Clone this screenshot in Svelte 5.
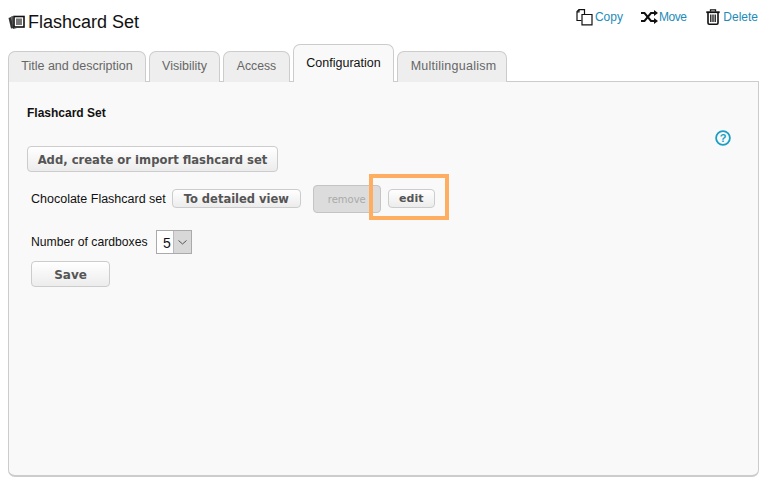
<script>
	let tabs = [
		{ label: 'Title and description' },
		{ label: 'Visibility' },
		{ label: 'Access' },
		{ label: 'Configuration', active: true },
		{ label: 'Multilingualism' }
	];
</script>

<div class="page">
	<header>
		<h1>
			<svg class="set-icon" width="17" height="16" viewBox="0 0 17 16">
				<path d="M3 3 L0.5 4 L3 14.5 L6 14 Z" fill="#333" />
				<path d="M5 2 L3 2.5 L5 15 L9 15 L5.5 14 Z" fill="#555" />
				<rect x="6" y="2.5" width="10" height="10.5" fill="none" stroke="#111" stroke-width="1.6" />
				<rect x="8" y="4.5" width="6" height="6.5" fill="#777" />
			</svg>
			Flashcard Set
		</h1>
		<div class="actions">
			<a href="#copy">
				<svg width="17" height="17" viewBox="0 0 17 17" fill="none" stroke="#111" stroke-width="1.2">
					<path d="M5.5 11.5 H1 V2.5 L3 .7 H8.5 V5" />
					<path d="M3 .7 V3 H1" />
					<path d="M6 5.5 H16 V15.8 H6 Z" fill="#fff" />
				</svg>
				Copy
			</a>
			<a href="#move" class="move">
				<svg width="17" height="14" viewBox="0 0 17 14" fill="none" stroke="#111" stroke-width="2">
					<path d="M0 3 H3.5 L10 11 H13" />
					<path d="M0 11 H3.5 L10 3 H13" />
					<path d="M13 0 L17 3 L13 6 Z M13 8 L17 11 L13 14 Z" fill="#111" stroke="none" />
				</svg>
				Move
			</a>
			<a href="#delete" class="delete">
				<svg width="14" height="16" viewBox="0 0 14 16" fill="none" stroke="#111">
					<path d="M.3 3.2 H13.7" stroke-width="1.8" />
					<path d="M4.5 2.5 V.8 H9.5 V2.5" stroke-width="1.3" />
					<path d="M2 4 V14 Q2 15.2 3.2 15.2 H10.8 Q12 15.2 12 14 V4" stroke-width="1.6" />
					<path d="M4.8 5.5 V13 M7 5.5 V13 M9.2 5.5 V13" stroke-width="1.3" />
				</svg>
				Delete
			</a>
		</div>
	</header>

	<nav class="tabs">
		{#each tabs as tab}
			<button class="tab" class:active={tab.active}>{tab.label}</button>
		{/each}
	</nav>

	<section class="panel">
		<h2>Flashcard Set</h2>
		<svg class="help" width="16" height="16" viewBox="0 0 16 16">
			<circle cx="8" cy="8" r="6.9" fill="none" stroke="#1a9fc4" stroke-width="1.8" />
			<text x="8" y="11.8" text-anchor="middle" class="help-mark">?</text>
		</svg>

		<button class="btn add">Add, create or import flashcard set</button>

		<div class="row set-row">
			<span class="set-name">Chocolate Flashcard set</span>
			<button class="btn small detail">To detailed view</button>
			<button class="btn remove" disabled>remove</button>
			<button class="btn small edit">edit</button>
			<div class="highlight"></div>
		</div>

		<div class="row boxes-row">
			<span>Number of cardboxes</span>
			<div class="select">
				<span class="value">5</span>
				<span class="arrow">
					<svg width="9" height="5" viewBox="0 0 9 5" fill="none" stroke="#555">
						<path d="M.5 .5 L4.5 4 L8.5 .5" />
					</svg>
				</span>
			</div>
		</div>

		<button class="btn save">Save</button>
	</section>
</div>

<style>
	:global(body) {
		background: #fff;
		font-family: 'Liberation Sans', Arial, sans-serif;
	}

	.page {
		padding: 0 18px 0 8px;
		width: 751px;
		height: 490px;
		box-sizing: content-box;
	}

	header {
		display: flex;
		justify-content: space-between;
		height: 44px;
	}

	h1 {
		display: flex;
		align-items: center;
		gap: 3px;
		margin: 12px 0 0;
		height: 20px;
		font-size: 18px;
		font-weight: 400;
		color: #111;
	}

	.set-icon {
		flex-shrink: 0;
	}

	.actions {
		display: flex;
		gap: 18px;
		margin: 8px 1px 0 0;
		height: 18px;
	}

	.actions a {
		display: flex;
		align-items: center;
		gap: 2px;
		font-size: 12px;
		color: #1e8bb8;
		text-decoration: none;
	}

	.actions .move {
		gap: 1px;
		margin-right: 2px;
		letter-spacing: -0.5px;
	}

	.actions .delete {
		gap: 3px;
	}

	.tabs {
		display: flex;
		align-items: flex-end;
		gap: 3px;
		height: 38px;
		margin-bottom: -1px;
		position: relative;
		z-index: 1;
	}

	.tab {
		flex-shrink: 0;
		height: 31px;
		padding: 0 0 2px;
		border: 1px solid #ccc;
		border-bottom: none;
		border-radius: 7px 7px 0 0;
		background: #eee;
		color: #666;
		font: 12.5px 'Liberation Sans', Arial, sans-serif;
	}

	.tab:nth-child(1) {
		width: 138px;
	}

	.tab:nth-child(2) {
		width: 71px;
	}

	.tab:nth-child(3) {
		width: 67px;
		font-size: 12.2px;
	}

	.tab:nth-child(4) {
		width: 101px;
	}

	.tab:nth-child(5) {
		width: 110px;
		letter-spacing: 0.25px;
		padding-left: 3px;
	}

	.tab.active {
		height: 38px;
		background: #f9f9f9;
		color: #111;
	}

	.panel {
		position: relative;
		height: 396px;
		box-sizing: border-box;
		border: 1px solid #ccc;
		border-bottom-width: 2px;
		border-radius: 0 0 7px 7px;
		background: #f9f9f9;
		padding: 24px 18px;
		font-size: 12px;
		color: #111;
	}

	h2 {
		margin: 0 0 26px;
		font-size: 12px;
		line-height: 14px;
		font-weight: 700;
	}

	.help {
		position: absolute;
		top: 48px;
		right: 27px;
	}

	.help-mark {
		font: 700 11px 'Liberation Sans', Arial, sans-serif;
		fill: #1a9fc4;
	}

	.btn {
		display: block;
		flex-shrink: 0;
		box-sizing: border-box;
		border: 1px solid #ccc;
		border-radius: 4px;
		background: linear-gradient(#fff, #ececec);
		color: #555;
		font: 700 12px 'DejaVu Sans', 'Liberation Sans', sans-serif;
		padding: 0;
	}

	.add {
		width: 251px;
		height: 26px;
		padding-top: 1px;
		font-size: 11.6px;
	}

	.row {
		display: flex;
		align-items: center;
		padding-left: 4px;
	}

	.set-name {
		font-size: 12.5px;
		margin-top: -1px;
	}

	.set-row {
		position: relative;
		margin-top: 13px;
		height: 28px;
	}

	.small {
		height: 19px;
		margin-top: -1px;
		font-size: 11.5px;
	}

	.detail {
		width: 129px;
		margin-left: 6px;
	}

	.remove {
		width: 68px;
		height: 28px;
		margin-left: 12px;
		background: #dcdcdc;
		border-color: #c4c4c4;
		color: #aaa;
		font-size: 10px;
		font-weight: 400;
	}

	.edit {
		width: 47px;
		margin-left: 7px;
		font-size: 11px;
	}

	.highlight {
		position: absolute;
		left: 342px;
		top: -11px;
		width: 80px;
		height: 46px;
		box-sizing: border-box;
		border: 4px solid #ffad60;
	}

	.boxes-row {
		margin-top: 17px;
		height: 24px;
		gap: 8px;
		font-size: 12.2px;
	}

	.select {
		display: flex;
		width: 36px;
		height: 24px;
		box-sizing: border-box;
		border: 1px solid #aaa;
		background: #fff;
	}

	.value {
		flex: 1;
		font-size: 14px;
		line-height: 24px;
		text-align: center;
		padding-left: 5px;
	}

	.arrow {
		display: flex;
		align-items: center;
		justify-content: center;
		width: 17px;
		background: #d8d8d8;
		border-left: 1px solid #bbb;
	}

	.save {
		width: 79px;
		height: 26px;
		margin: 7px 0 0 4px;
		padding-top: 1px;
	}
</style>
